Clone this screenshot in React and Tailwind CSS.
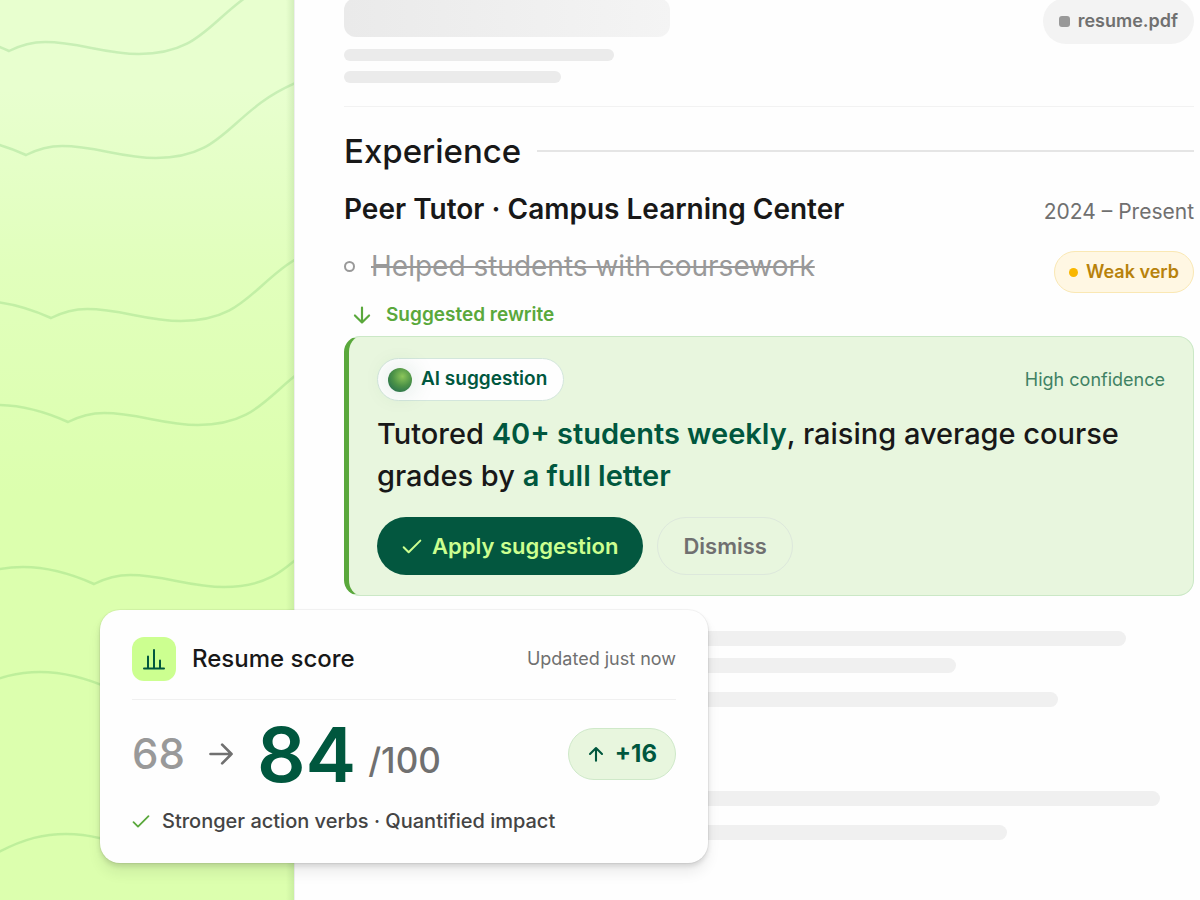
import React from "react";

const WAVES = [
  [9, 51],
  [26, 155],
  [51, 318],
  [68, 422],
  [94, 584],
  [111, 689],
  [137, 851],
];

const WAVE_PATH =
  "M-140 2C-112 -13 -92 -17 -71 -17C-45 -17 -20 -9 0 0C12 -6 22 -9 36 -9C70 -9 95 3 130 3C202 3 202 -44 272 -73";

function Hills() {
  return (
    <svg className="absolute inset-0 h-full w-full" aria-hidden="true" fill="none">
      {WAVES.map(([x, y]) => (
        <path
          key={y}
          d={WAVE_PATH}
          transform={`translate(${x} ${y})`}
          stroke="#58b85a"
          strokeOpacity="0.22"
          strokeWidth="2.5"
        />
      ))}
    </svg>
  );
}

function Icon({ className, width = 2, children }) {
  return (
    <svg
      className={className}
      viewBox="0 0 24 24"
      fill="none"
      stroke="currentColor"
      strokeWidth={width}
      strokeLinecap="round"
      strokeLinejoin="round"
      aria-hidden="true"
    >
      {children}
    </svg>
  );
}

function Check({ className }) {
  return (
    <Icon className={className} width={2.4}>
      <path d="M2 13.5L8 19.5L22 5.500" />
    </Icon>
  );
}

function Line({ className }) {
  return <div className={`rounded-full bg-[#f0f0f0] ${className}`} />;
}

function ScoreCard() {
  return (
    <section
      aria-label="Resume score"
      className="absolute left-[100px] top-[610px] w-[608px] rounded-[20px] bg-[#fefefe] px-8 pb-7 pt-[27px] shadow-[0_0_0_1px_rgba(0,0,0,0.04),0_3px_5px_rgba(0,0,0,0.12),0_10px_14px_rgba(0,0,0,0.07)]"
    >
      <div className="flex items-center border-b border-[#f0f0f0] pb-[18px]">
        <div className="flex size-11 items-center justify-center rounded-xl bg-[#ccff90] text-[#00573e]">
          <Icon className="size-6" width={2}>
            <path d="M2 21.5H22M6 21V9.500M12 21V3M18 21V13.500" />
          </Icon>
        </div>
        <h3 className="ml-4 text-2xl font-medium text-[#181818]">Resume score</h3>
        <p className="ml-auto text-lg text-[#707070]">Updated just now</p>
      </div>
      <div className="flex items-center pt-[15px]">
        <span className="text-[42px] font-medium leading-none text-[#999]">68</span>
        <Icon className="ml-[22px] size-7 text-[#707070]" width={2.3}>
          <path d="M3 12H21M13 4L21 12L13 20" />
        </Icon>
        <div className="ml-[22px] flex items-center">
          <span className="text-[76px] font-semibold leading-[78px] text-[#00573e]">84</span>
          <span className="ml-3 mt-3 text-[35px] font-medium leading-none text-[#707070]">/100</span>
        </div>
        <div className="ml-auto flex h-[52px] items-center gap-[10px] rounded-full border border-[#cfe9c9] bg-[#e8f6de] px-[18px] text-[#00573e]">
          <Icon className="size-[18px]" width={2.8}>
            <path d="M12 21V4M4 12L12 4L20 12" />
          </Icon>
          <span className="text-2xl font-bold">+16</span>
        </div>
      </div>
      <div className="flex items-center gap-3 pt-[14px] text-[#444]">
        <Check className="size-[18px] text-[#5aa83c]" />
        <span className="text-xl font-medium">Stronger action verbs · Quantified impact</span>
      </div>
    </section>
  );
}

export default function App() {
  return (
    <div className="relative flex min-h-screen overflow-hidden bg-[#fefefe] font-['Inter','Liberation_Sans',sans-serif] text-[#181818]">
      <aside className="relative w-[294px] shrink-0 overflow-hidden bg-linear-to-b from-[#e8ffcf] from-10% via-[#e1ffbc] via-30% to-[#dcffae] to-55%">
        <Hills />
        <div className="absolute inset-y-0 right-0 w-2 bg-linear-to-r from-transparent to-[#7fae6a]/20" />
      </aside>

      <main className="min-w-0 flex-1 border-l border-[#eee] pl-[49px] pr-[6px]">
        <header className="-mt-[2px] flex items-start justify-between border-b border-[#f2f2f2] pb-[23px]">
          <div className="flex-1">
            <div className="h-[39px] w-[38%] rounded-xl bg-linear-to-r from-[#eaeaea] to-[#f4f4f4]" />
            <div className="mt-3 h-3 w-[270px] rounded-full bg-[#ebebeb]" />
            <div className="mt-[10px] h-3 w-[217px] rounded-full bg-[#ebebeb]" />
          </div>
          <div className="-ml-40 flex h-[46px] items-center gap-2 rounded-full bg-[#f3f3f3] px-4 text-lg font-semibold text-[#707070]">
            <span className="size-[11px] rounded-[3px] bg-[#999]" />
            resume.pdf
          </div>
        </header>

        <div className="flex items-center gap-4 pt-6">
          <h1 className="text-[33px] font-medium leading-[40px]">Experience</h1>
          <div className="h-[2px] flex-1 bg-[#e5e5e5]" />
        </div>

        <div className="mt-[18px] flex items-baseline justify-between">
          <h2 className="text-[28px] font-semibold leading-[40px]">Peer Tutor · Campus Learning Center</h2>
          <span className="text-[21px] text-[#707070]">2024 – Present</span>
        </div>

        <div className="mt-[17px] flex items-start justify-between">
          <div className="flex items-center gap-4">
            <span className="size-[11px] rounded-full border-2 border-[#999]" />
            <s className="text-[28px] leading-[40px] text-[#999] decoration-2">Helped students with coursework</s>
          </div>
          <div className="mt-[5px] flex h-[42px] items-center gap-2 rounded-full border border-[#fae8b4] bg-[#fff7e3] px-[14px] text-lg font-semibold text-[#b8820b]">
            <span className="size-[9px] rounded-full bg-[#f9b700]" />
            Weak verb
          </div>
        </div>

        <div className="mt-2 flex items-center gap-[14px] pl-2 text-[#5aa83c]">
          <Icon className="size-5" width={2.6}>
            <path d="M12 3V21M3.500 12.500L12 21L20.500 12.500" />
          </Icon>
          <span className="text-[19px] font-semibold leading-7">Suggested rewrite</span>
        </div>

        <section className="mt-[7px] rounded-2xl border border-l-[5px] border-[#cbe8c6] border-l-[#5aa83c] bg-[#e8f6de] px-7 pb-5 pt-[21px]">
          <div className="flex items-center justify-between">
            <div className="flex h-[43px] items-center gap-[9px] rounded-full border border-[#d3e6dc] bg-[#fefefe] px-[10px] pr-4 text-[19px] font-semibold text-[#00573e]">
              <span className="size-6 rounded-full bg-[radial-gradient(circle_at_60%_35%,#8cc65a,#4d9347_45%,#1c6650_95%)] shadow-[0_0_24px_rgba(0,87,62,0.18)]" />
              AI suggestion
            </div>
            <span className="text-lg text-[#3f8264]">High confidence</span>
          </div>
          <p className="mt-3 text-[29px] font-medium leading-[42px]">
            Tutored <strong className="font-semibold text-[#00573e]">40+ students weekly</strong>, raising average
            course grades by <strong className="font-semibold text-[#00573e]">a full letter</strong>
          </p>
          <div className="mt-5 flex gap-[14px]">
            <button className="flex h-[58px] items-center gap-[10px] rounded-full bg-[#03573f] px-[25px] text-[22px] font-semibold text-[#ccff90]">
              <Check className="size-5" />
              Apply suggestion
            </button>
            <button className="h-[58px] rounded-full border border-[#dde8dc] px-[25px] text-[22px] font-semibold text-[#707070]">
              Dismiss
            </button>
          </div>
        </section>

        <div className="pt-[35px]" aria-hidden="true">
          <Line className="h-[15px] w-[92%]" />
          <Line className="mt-3 h-[15px] w-[72%]" />
          <Line className="mt-[19px] h-[15px] w-[84%]" />
          <Line className="mt-[84px] h-[15px] w-[96%]" />
          <Line className="mt-[19px] h-[15px] w-[78%]" />
        </div>
      </main>

      <ScoreCard />
    </div>
  );
}
